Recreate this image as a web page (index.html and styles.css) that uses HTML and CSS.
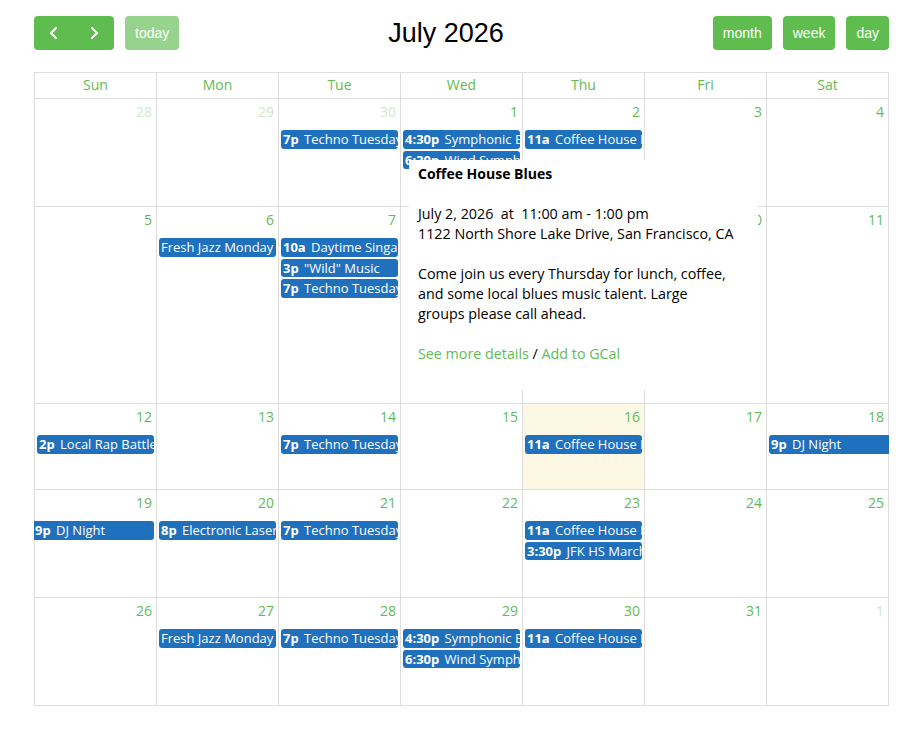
FILE: index.html
```html
<!DOCTYPE html>
<html lang="en">
  <head>
    <meta charset="UTF-8" />
    <meta name="viewport" content="width=device-width, initial-scale=1.0" />
    <title>Events Calendar</title>
    <link rel="stylesheet" href="styles.css">
  </head>
  <body>
    <div class="calendar">
      <div class="toolbar">
        <div class="left">
          <div class="btn-group">
            <button class="btn arrow" aria-label="prev">
              <svg width="12" height="14" viewBox="0 0 12 14"><path d="M8 2 L3 7 L8 12" fill="none" stroke="#fff" stroke-width="2.2" stroke-linecap="round" stroke-linejoin="round"/></svg>
            </button>
            <button class="btn arrow" aria-label="next">
              <svg width="12" height="14" viewBox="0 0 12 14"><path d="M4 2 L9 7 L4 12" fill="none" stroke="#fff" stroke-width="2.2" stroke-linecap="round" stroke-linejoin="round"/></svg>
            </button>
          </div>
          <button class="btn disabled">today</button>
        </div>
        <h2 class="title">July 2026</h2>
        <div class="right">
          <button class="btn">month</button>
          <button class="btn">week</button>
          <button class="btn">day</button>
        </div>
      </div>

      <div class="month">
        <div class="row head">
          <div class="cell">Sun</div>
          <div class="cell">Mon</div>
          <div class="cell">Tue</div>
          <div class="cell">Wed</div>
          <div class="cell">Thu</div>
          <div class="cell">Fri</div>
          <div class="cell">Sat</div>
        </div>

        <div class="row week w1">
          <div class="cell other"><div class="num">28</div></div>
          <div class="cell other"><div class="num">29</div></div>
          <div class="cell other"><div class="num">30</div>
            <div class="event"><b>7p</b> Techno Tuesday</div>
          </div>
          <div class="cell"><div class="num">1</div>
            <div class="event"><b>4:30p</b> Symphonic Band</div>
            <div class="event"><b>6:30p</b> Wind Symphony</div>
          </div>
          <div class="cell"><div class="num">2</div>
            <div class="event"><b>11a</b> Coffee House Blues</div>
          </div>
          <div class="cell"><div class="num">3</div></div>
          <div class="cell"><div class="num">4</div></div>
        </div>

        <div class="row week w2">
          <div class="cell"><div class="num">5</div></div>
          <div class="cell"><div class="num">6</div>
            <div class="event">Fresh Jazz Monday</div>
          </div>
          <div class="cell"><div class="num">7</div>
            <div class="event"><b>10a</b> Daytime Singalong</div>
            <div class="event"><b>3p</b> "Wild" Music</div>
            <div class="event"><b>7p</b> Techno Tuesday</div>
          </div>
          <div class="cell"><div class="num">8</div></div>
          <div class="cell"><div class="num">9</div></div>
          <div class="cell"><div class="num">10</div></div>
          <div class="cell"><div class="num">11</div></div>
        </div>

        <div class="row week w3">
          <div class="cell"><div class="num">12</div>
            <div class="event"><b>2p</b> Local Rap Battle</div>
          </div>
          <div class="cell"><div class="num">13</div></div>
          <div class="cell"><div class="num">14</div>
            <div class="event"><b>7p</b> Techno Tuesday</div>
          </div>
          <div class="cell"><div class="num">15</div></div>
          <div class="cell today"><div class="num">16</div>
            <div class="event"><b>11a</b> Coffee House Blues</div>
          </div>
          <div class="cell"><div class="num">17</div></div>
          <div class="cell"><div class="num">18</div>
            <div class="event cont-right"><b>9p</b> DJ Night</div>
          </div>
        </div>

        <div class="row week w4">
          <div class="cell"><div class="num">19</div>
            <div class="event cont-left"><b>9p</b> DJ Night</div>
          </div>
          <div class="cell"><div class="num">20</div>
            <div class="event"><b>8p</b> Electronic Laser Show</div>
          </div>
          <div class="cell"><div class="num">21</div>
            <div class="event"><b>7p</b> Techno Tuesday</div>
          </div>
          <div class="cell"><div class="num">22</div></div>
          <div class="cell"><div class="num">23</div>
            <div class="event"><b>11a</b> Coffee House Blues</div>
            <div class="event"><b>3:30p</b> JFK HS Marching Band</div>
          </div>
          <div class="cell"><div class="num">24</div></div>
          <div class="cell"><div class="num">25</div></div>
        </div>

        <div class="row week w5">
          <div class="cell"><div class="num">26</div></div>
          <div class="cell"><div class="num">27</div>
            <div class="event">Fresh Jazz Monday</div>
          </div>
          <div class="cell"><div class="num">28</div>
            <div class="event"><b>7p</b> Techno Tuesday</div>
          </div>
          <div class="cell"><div class="num">29</div>
            <div class="event"><b>4:30p</b> Symphonic Band</div>
            <div class="event"><b>6:30p</b> Wind Symphony</div>
          </div>
          <div class="cell"><div class="num">30</div>
            <div class="event"><b>11a</b> Coffee House Blues</div>
          </div>
          <div class="cell"><div class="num">31</div></div>
          <div class="cell other"><div class="num">1</div></div>
        </div>

        <div class="popover">
          <div class="pop-title">Coffee House Blues</div>
          <div class="gap"></div>
          <div>July 2, 2026&nbsp; at&nbsp; 11:00 am - 1:00 pm</div>
          <div>1122 North Shore Lake Drive, San Francisco, CA</div>
          <div class="gap"></div>
          <div>Come join us every Thursday for lunch, coffee,</div>
          <div>and some local blues music talent. Large</div>
          <div>groups please call ahead.</div>
          <div class="gap"></div>
          <div><a href="#">See more details</a> / <a href="#">Add to GCal</a></div>
        </div>
      </div>
    </div>
  </body>
</html>
```

FILE: styles.css
```css
body {
  margin: 0;
  background: #fff;
  color: #000;
  font-family: "Open Sans", sans-serif;
  font-size: 14px;
}

.calendar {
  padding: 16px 34px;
}

.toolbar {
  display: flex;
  align-items: center;
  justify-content: space-between;
  height: 34px;
  margin-bottom: 22px;
}

.left,
.right {
  display: flex;
  gap: 11px;
}

.btn-group {
  display: flex;
  border-radius: 4px;
  overflow: hidden;
}

.btn {
  height: 34px;
  padding: 0 10px;
  border: 0;
  border-radius: 4px;
  background: #5fbd50;
  color: #fff;
  font-family: "Liberation Sans", Arial, sans-serif;
  font-size: 14px;
}

.btn.arrow {
  width: 40px;
  border-radius: 0;
  display: flex;
  align-items: center;
  justify-content: center;
}

.btn.disabled {
  opacity: 0.65;
}

.title {
  margin: 0;
  font-family: "Liberation Sans", Arial, sans-serif;
  font-size: 27px;
  font-weight: normal;
}

.month {
  position: relative;
  border-top: 1px solid #ddd;
  border-left: 1px solid #ddd;
}

.row {
  display: grid;
  grid-template-columns: repeat(7, 1fr);
}

.cell {
  border-right: 1px solid #ddd;
  border-bottom: 1px solid #ddd;
  min-width: 0;
  box-sizing: border-box;
}

.head .cell {
  height: 26px;
  line-height: 24px;
  text-align: center;
  color: #62bb55;
}

.w1 .cell, .w4 .cell, .w5 .cell { height: 108px; }
.w2 .cell { height: 197px; }
.w3 .cell { height: 86px; }

.num {
  padding: 3px 4px 8px;
  line-height: 20px;
  text-align: right;
  color: #62bb55;
}

.other .num {
  color: #cfe9c9;
}

.today {
  background: #fcf8e3;
}

.event {
  margin: 0 2px 2px;
  padding: 0 2px;
  height: 18.5px;
  line-height: 18px;
  border-radius: 3px;
  background: #1f71bd;
  color: #fff;
  font-size: 13px;
  white-space: nowrap;
  overflow: hidden;
}

.event b {
  margin-right: 2px;
}

.cont-right {
  margin-right: -1px;
  border-top-right-radius: 0;
  border-bottom-right-radius: 0;
}

.cont-left {
  margin-left: -1px;
  padding-left: 1px;
  border-top-left-radius: 0;
  border-bottom-left-radius: 0;
}

.popover {
  position: absolute;
  left: 374px;
  top: 87px;
  width: 349px;
  height: 230px;
  box-sizing: border-box;
  padding: 4px 9px;
  background: #fff;
  font-size: 14.3px;
  line-height: 20px;
  white-space: nowrap;
}

.gap {
  height: 20px;
}

.pop-title {
  font-weight: bold;
  font-size: 14px;
}

.popover a {
  color: #62bb55;
  text-decoration: none;
}
```
